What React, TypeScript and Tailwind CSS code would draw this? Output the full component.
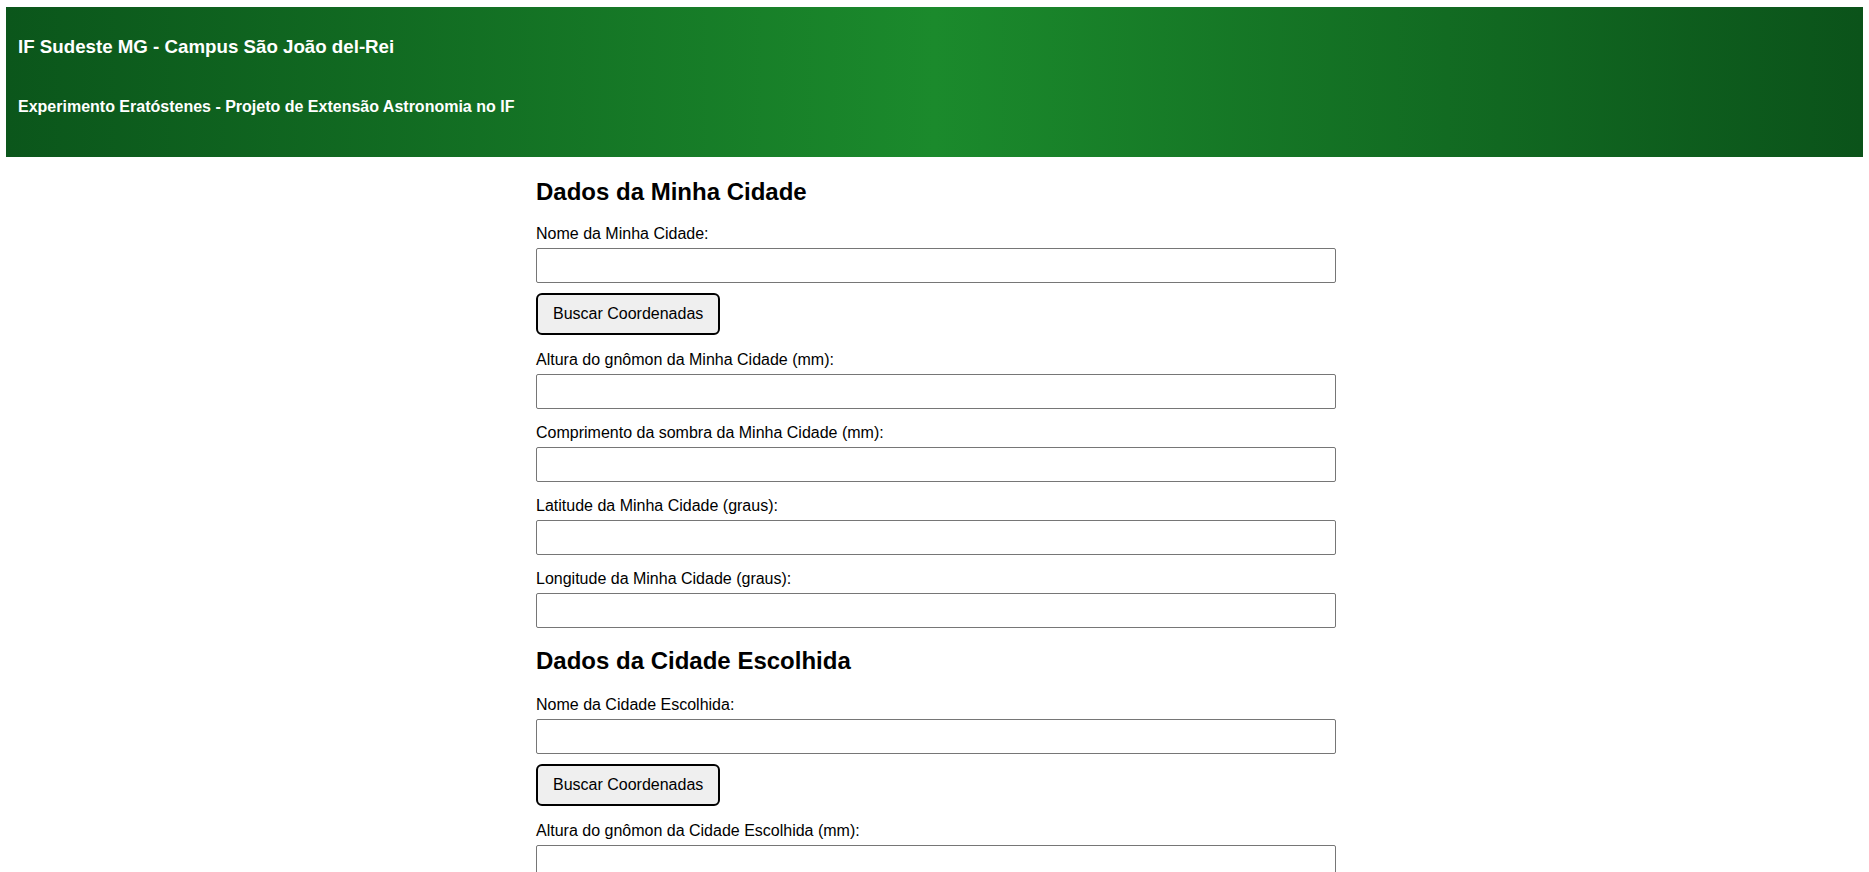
import React from 'react';

type Field = { label: string };

const minhaCidade: Field[] = [
  { label: 'Altura do gnômon da Minha Cidade (mm):' },
  { label: 'Comprimento da sombra da Minha Cidade (mm):' },
  { label: 'Latitude da Minha Cidade (graus):' },
  { label: 'Longitude da Minha Cidade (graus):' },
];

const cidadeEscolhida: Field[] = [
  { label: 'Altura do gnômon da Cidade Escolhida (mm):' },
  { label: 'Comprimento da sombra da Cidade Escolhida (mm):' },
  { label: 'Latitude da Cidade Escolhida (graus):' },
  { label: 'Longitude da Cidade Escolhida (graus):' },
];

const Input: React.FC = () => (
  <input
    type="text"
    className="block w-full h-[35px] border border-[#767676] rounded-[2px] bg-white px-[4px] text-[16px] outline-none"
  />
);

const Label: React.FC<{ text: string }> = ({ text }) => (
  <label className="block text-[16px] leading-[18px] text-black mb-[5px]">{text}</label>
);

const SearchButton: React.FC<{ text: string }> = ({ text }) => (
  <button className="h-[42px] px-[15px] border-2 border-black rounded-[6px] bg-[#efefef] text-[16px] leading-[18px] text-black">
    {text}
  </button>
);

const Section: React.FC<{ title: string; nameLabel: string; fields: Field[]; first?: boolean }> = ({
  title,
  nameLabel,
  fields,
  first,
}) => (
  <section className="flex flex-col">
    <h2 className={`${first ? 'mt-[21px]' : 'mt-[19px]'} text-[24px] leading-[28px] font-bold text-black`}>
      {title}
    </h2>
    <div className={first ? 'mt-[19px]' : 'mt-[21px]'}>
      <Label text={nameLabel} />
      <Input />
    </div>
    <div className="mt-[10px]">
      <SearchButton text="Buscar Coordenadas" />
    </div>
    {fields.map((f, i) => (
      <div key={f.label} className={i === 0 ? 'mt-[16px]' : 'mt-[15px]'}>
        <Label text={f.label} />
        <Input />
      </div>
    ))}
  </section>
);

export default function App() {
  return (
    <div className="min-h-screen bg-white pt-[7px] pb-[40px] font-['Liberation_Sans',Arial,sans-serif]">
      <header className="mx-[6px] h-[150px] bg-linear-to-r from-[#0b561b] via-[#1b8a2c] to-[#0b531a] pl-[12px] pt-[29px] text-white">
        <h1 className="text-[18.72px] leading-[22px] font-bold">IF Sudeste MG - Campus São João del-Rei</h1>
        <h4 className="mt-[40px] text-[16px] leading-[18px] font-bold">
          Experimento Eratóstenes - Projeto de Extensão Astronomia no IF
        </h4>
      </header>

      <main className="ml-[536px] w-[800px]">
        <Section title="Dados da Minha Cidade" nameLabel="Nome da Minha Cidade:" fields={minhaCidade} first />
        <Section title="Dados da Cidade Escolhida" nameLabel="Nome da Cidade Escolhida:" fields={cidadeEscolhida} />
        <div className="mt-[20px]">
          <SearchButton text="Calcular" />
        </div>
      </main>
    </div>
  );
}
